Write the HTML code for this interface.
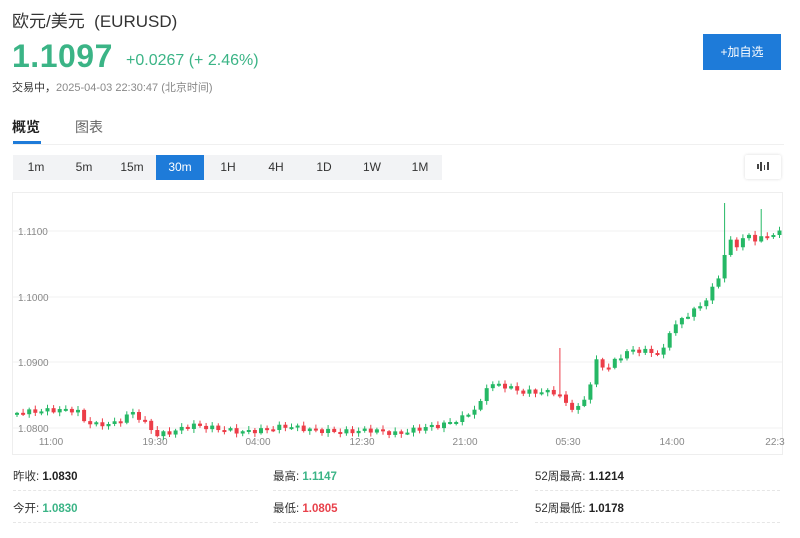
<!DOCTYPE html>
<html><head><meta charset="utf-8"><style>
*{margin:0;padding:0;box-sizing:border-box}
body{width:800px;height:538px;background:#fff;font-family:"Liberation Sans","Noto Sans CJK SC",sans-serif;position:relative;overflow:hidden;color:#333}
.a{position:absolute;white-space:nowrap}
.tf{position:absolute;top:155px;height:25px;line-height:25px;font-size:12px;color:#333;text-align:center;width:48px}
.lbl{font-size:11.5px;color:#333}
.v{font-weight:bold;font-size:11.5px}
.sep{position:absolute;height:0;border-top:1px dashed #e6e6e6;width:245px}
</style></head><body>
<div class="a" style="left:12px;top:7px;font-size:17px;color:#333">欧元/美元 &nbsp;(EURUSD)</div>
<div class="a" style="left:12px;top:38px;font-size:32px;font-weight:bold;color:#3bb486;letter-spacing:0.5px">1.1097</div>
<div class="a" style="left:126px;top:52px;font-size:16px;color:#3bb486">+0.0267 (+ 2.46%)</div>
<div class="a" style="left:12px;top:79px;font-size:11px;color:#888"><span style="color:#333">交易中，</span>2025-04-03 22:30:47 (北京时间)</div>
<div class="a" style="left:703px;top:34px;width:78px;height:36px;background:#1e7bd9;color:#fff;font-size:12px;line-height:36px;text-align:center">+加自选</div>
<div class="a" style="left:12px;top:117px;font-size:14px;font-weight:bold;color:#222">概览</div>
<div class="a" style="left:75px;top:117px;font-size:14px;color:#666">图表</div>
<div class="a" style="left:13px;top:141px;width:28px;height:3px;background:#1e7bd9"></div>
<div class="a" style="left:12px;top:144px;width:772px;height:1px;background:#f0f0f0"></div>
<div class="a" style="left:13px;top:155px;width:429px;height:25px;background:#f2f3f5"></div>
<div class="a" style="left:156px;top:155px;width:48px;height:25px;background:#1e7bd9"></div>
<div class="tf" style="left:12px">1m</div>
<div class="tf" style="left:60px">5m</div>
<div class="tf" style="left:108px">15m</div>
<div class="tf" style="left:156px;color:#fff">30m</div>
<div class="tf" style="left:204px">1H</div>
<div class="tf" style="left:252px">4H</div>
<div class="tf" style="left:300px">1D</div>
<div class="tf" style="left:348px">1W</div>
<div class="tf" style="left:396px">1M</div>
<div class="a" style="left:745px;top:155px;width:36px;height:24px;background:#fff;box-shadow:0 0 3px rgba(0,0,0,.15);border-radius:2px">
<svg width="36" height="24"><g fill="#444"><rect x="12" y="9" width="2" height="5"/><rect x="15" y="7" width="2" height="9"/><rect x="19" y="10" width="1" height="5"/><rect x="22" y="7" width="2" height="8"/></g></svg></div>
<svg class="a" style="left:0;top:0" width="800" height="538" id="ch">
<rect x="12.5" y="192.5" width="770" height="262" fill="none" stroke="#eee"/>
<g stroke="#f2f2f2"><line x1="13" x2="782" y1="231" y2="231"/><line x1="13" x2="782" y1="297" y2="297"/><line x1="13" x2="782" y1="362" y2="362"/><line x1="13" x2="782" y1="428" y2="428"/></g>
<g font-size="10" fill="#888" font-family="Liberation Sans,sans-serif">
<text x="18" y="235">1.1100</text><text x="18" y="301">1.1000</text><text x="18" y="366">1.0900</text><text x="18" y="432">1.0800</text>
<g text-anchor="middle"><text x="51" y="445">11:00</text><text x="155" y="445">19:30</text><text x="258" y="445">04:00</text><text x="362" y="445">12:30</text><text x="465" y="445">21:00</text><text x="568" y="445">05:30</text><text x="672" y="445">14:00</text><text x="775" y="445">22:3</text></g></g>
<g id="cd"></g>
</svg>
<div class="a lbl" style="left:13px;top:468px">昨收: <span class="v" style="color:#222">1.0830</span></div>
<div class="a lbl" style="left:273px;top:468px">最高: <span class="v" style="color:#3bb486">1.1147</span></div>
<div class="a lbl" style="left:535px;top:468px">52周最高: <span class="v" style="color:#222">1.1214</span></div>
<div class="a lbl" style="left:13px;top:500px">今开: <span class="v" style="color:#3bb486">1.0830</span></div>
<div class="a lbl" style="left:273px;top:500px">最低: <span class="v" style="color:#e8414b">1.0805</span></div>
<div class="a lbl" style="left:535px;top:500px">52周最低: <span class="v" style="color:#222">1.0178</span></div>
<div class="sep" style="left:13px;top:490px"></div><div class="sep" style="left:273px;top:490px"></div><div class="sep" style="left:535px;top:490px"></div>
<div class="sep" style="left:13px;top:522px"></div><div class="sep" style="left:273px;top:522px"></div><div class="sep" style="left:535px;top:522px"></div>
<script>
(function(){
var k=[[13,413],[50,410],[75,410],[80,420],[95,425],[115,423],[130,412],[140,420],[155,435],[170,432],[190,425],[210,428],[240,432],[260,430],[285,426],[310,430],[340,432],[370,430],[395,434],[420,428],[440,425],[460,418],[478,405],[485,385],[500,385],[520,392],[540,392],[555,392],[565,405],[575,410],[585,395],[595,360],[605,370],[615,358],[630,350],[650,352],[660,355],[668,330],[685,315],[700,305],[710,290],[720,270],[725,240],[735,245],[745,235],[755,240],[775,232],[780,234]];
function f(x){for(var i=1;i<k.length;i++){if(x<=k[i][0]){var a=k[i-1],b=k[i],t=(x-a[0])/(b[0]-a[0]);return a[1]+t*(b[1]-a[1]);}}return 234;}
var NS='http://www.w3.org/2000/svg',g=document.getElementById('cd'),prev=413;
function el(n,at){var e=document.createElementNS(NS,n);for(var q in at)e.setAttribute(q,at[q]);g.appendChild(e);}
for(var i=0;;i++){var x=15+i*6.1;if(x>780)break;
var c=f(x)+Math.sin(i*2.3)*2.5;var o=prev;
var hi=Math.min(o,c)-1-Math.abs(Math.sin(i*1.7))*3,lo=Math.max(o,c)+1+Math.abs(Math.cos(i*1.3))*3;
if(Math.abs(x-555)<3)hi=348;if(Math.abs(x-724)<3)hi=203;if(Math.abs(x-762)<3)hi=209;
var col=c<o?'#25b865':'#ec3d48';var bt=Math.min(o,c),h=Math.max(2,Math.abs(o-c));
el('line',{x1:x+2,x2:x+2,y1:hi,y2:lo,stroke:col,'stroke-width':1});
el('rect',{x:x,y:bt,width:4,height:h,fill:col});prev=c;}
})();
</script>
</body></html>
